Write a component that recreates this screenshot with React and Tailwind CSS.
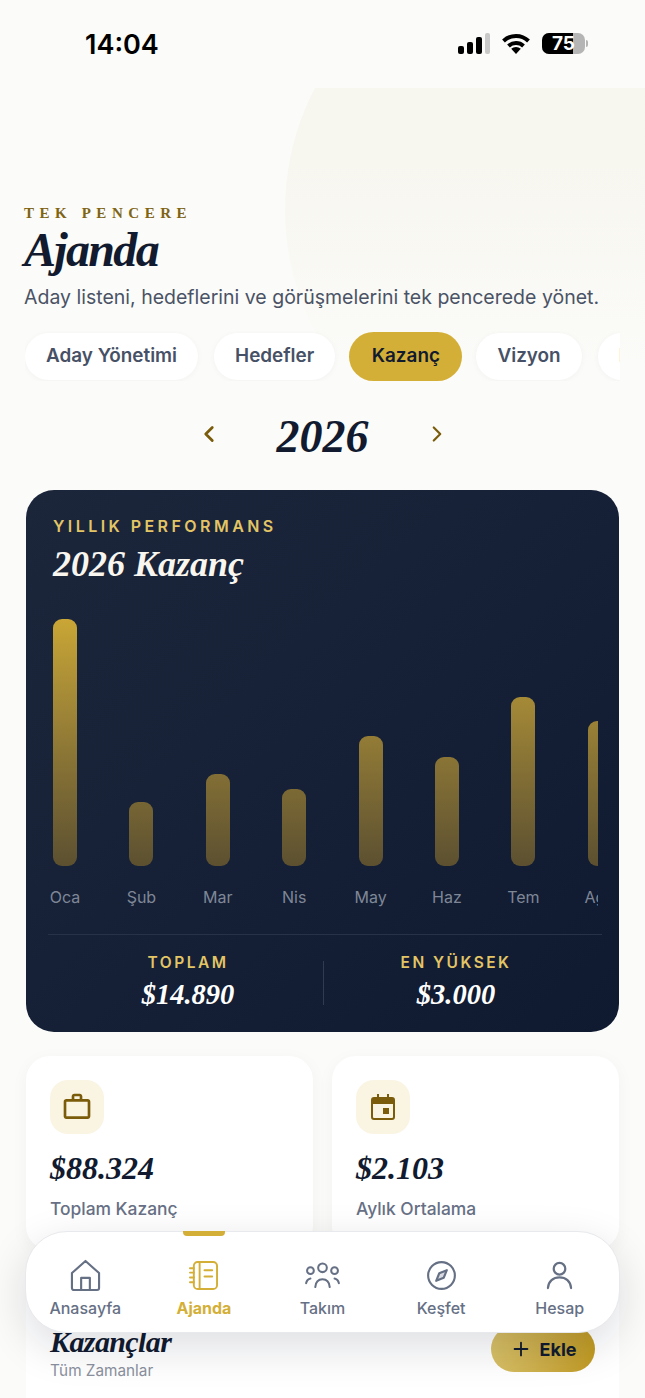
import { ChevronLeft, ChevronRight, Plus } from 'lucide-react'
import { MdOutlineWorkOutline } from 'react-icons/md'

const serif = "font-['Liberation_Serif',serif]"

const tabs = ['Aday Yönetimi', 'Hedefler', 'Kazanç', 'Vizyon', 'Notlar']

const months = [
  { label: 'Oca', height: 247 },
  { label: 'Şub', height: 64 },
  { label: 'Mar', height: 92 },
  { label: 'Nis', height: 77 },
  { label: 'May', height: 130 },
  { label: 'Haz', height: 109 },
  { label: 'Tem', height: 169 },
  { label: 'Ağu', height: 145 },
]

function HomeIcon() {
  return (
    <svg viewBox="0 0 32 34" fill="none" stroke="currentColor" strokeWidth="2.2" strokeLinejoin="round" className="h-[33px] w-[31px]">
      <path d="M2 14.500 16 2l14 12.500V30a2 2 0 0 1-2 2H4a2 2 0 0 1-2-2z" />
      <path d="M11.500 32V19.500h9V32" />
    </svg>
  )
}

function NotebookIcon() {
  return (
    <svg viewBox="0 0 30 32" fill="none" stroke="currentColor" strokeWidth="2" strokeLinecap="round" className="h-[31px] w-[29px]">
      <rect x="5" y="2" width="24" height="28" rx="4" />
      <path d="M11 2v28" />
      <path d="M1 8.500h4M1 13h4M1 18h4M1 23h4" />
      <path d="M16 10.500h8M16 17h8" />
    </svg>
  )
}

function TeamIcon() {
  return (
    <svg viewBox="0 0 36 28" fill="none" stroke="currentColor" strokeWidth="2.100" strokeLinecap="round" className="h-[27px] w-[35px]">
      <circle cx="18" cy="6" r="4.500" />
      <circle cx="5.500" cy="9" r="3.500" />
      <circle cx="30.500" cy="9" r="3.500" />
      <path d="M10.500 26c.5-5 3.500-8 7.500-8s7 3 7.500 8" />
      <path d="M1 22c.6-2.600 2-4.300 4.500-4.800" />
      <path d="M35 22c-.6-2.600-2-4.300-4.500-4.800" />
    </svg>
  )
}

function CompassIcon() {
  return (
    <svg viewBox="0 0 32 32" fill="none" stroke="currentColor" strokeWidth="2.200" strokeLinejoin="round" className="size-[31px]">
      <circle cx="16" cy="16" r="13.800" />
      <path d="M21.500 10.500 18.300 18.300 10.500 21.500 13.700 13.700z" fill="currentColor" fillOpacity="0.25" />
    </svg>
  )
}

function PersonIcon() {
  return (
    <svg viewBox="0 0 28 30" fill="none" stroke="currentColor" strokeWidth="2.300" strokeLinecap="round" className="h-[29px] w-[27px]">
      <circle cx="14" cy="8" r="6" />
      <path d="M2 28c.5-7 5.500-11 12-11s11.500 4 12 11" />
    </svg>
  )
}

function CalendarIcon() {
  return (
    <svg viewBox="0 0 24 26" className="h-[26px] w-[24px]" fill="currentColor">
      <path d="M6 0h2v3h8V0h2v3h3a3 3 0 0 1 3 3v17a3 3 0 0 1-3 3H3a3 3 0 0 1-3-3V6a3 3 0 0 1 3-3h3zM2 10v13a1 1 0 0 0 1 1h18a1 1 0 0 0 1-1V10z" />
      <rect x="12" y="14" width="6" height="6" />
    </svg>
  )
}

function StatusBar() {
  return (
    <div className="flex h-[88px] items-start justify-between pt-[28px] pr-[57px] pl-[85px]">
      <span className="text-[27px] leading-[34px] font-semibold text-black">14:04</span>
      <div className="mt-[5px] flex items-center gap-3">
        <div className="flex h-[21px] items-end gap-[3px]">
          <span className="h-[8px] w-[6px] rounded-[2px] bg-black" />
          <span className="h-[12px] w-[6px] rounded-[2px] bg-black" />
          <span className="h-[17px] w-[6px] rounded-[2px] bg-black" />
          <span className="h-[21px] w-[5px] rounded-[2px] bg-[#c9c9c9]" />
        </div>
        <svg viewBox="0 0 28 21" className="h-[21px] w-[28px]" fill="none" stroke="black" strokeWidth="4">
          <path d="M1.500 8a18 18 0 0 1 25 0" />
          <path d="M6.500 13a11 11 0 0 1 15 0" />
          <path d="M14 21l-4.800-5.200a7 7 0 0 1 9.600 0z" fill="black" stroke="none" />
        </svg>
        <div className="flex items-center gap-[1px]">
          <div className="relative flex h-[21px] w-[43px] overflow-hidden rounded-[7px] bg-[#b5b5b5]">
            <div className="w-[31px] bg-black" />
            <span className="absolute inset-0 flex items-center justify-center text-[19px] leading-none font-bold text-white">75</span>
          </div>
          <span className="h-[7px] w-[2px] rounded-r-full bg-[#b5b5b5]" />
        </div>
      </div>
    </div>
  )
}

function EarningsChart() {
  return (
    <div className="mt-[35px] mr-[21px] ml-[22px] overflow-hidden">
      <div className="flex w-[640px] items-end gap-[52.400px] pl-[5px]">
        {months.map((m) => (
          <div key={m.label} className="flex h-[247px] w-[24px] shrink-0 items-end">
            <div
              className="w-full rounded-[9px] bg-linear-to-b from-[#c9a635] to-[#5c5030] bg-[length:100%_247px] bg-bottom"
              style={{ height: m.height }}
            />
          </div>
        ))}
      </div>
      <div className="mt-[21px] flex w-[640px] gap-[52.400px] pl-[5px]">
        {months.map((m) => (
          <div key={m.label} className="flex w-[24px] shrink-0 justify-center">
            <span className="text-[16px] leading-5 text-[#7f8797]">{m.label}</span>
          </div>
        ))}
      </div>
    </div>
  )
}

function StatColumn({ label, value }) {
  return (
    <div className="flex flex-col items-center">
      <span className="text-[15.500px] leading-5 font-semibold tracking-[0.16em] text-[#e3c565]">{label}</span>
      <span className={`${serif} mt-[4px] text-[28.500px] leading-[36px] font-bold text-white italic`}>{value}</span>
    </div>
  )
}

function SummaryCard({ icon, value, label }) {
  return (
    <div className="h-[194px] rounded-[24px] bg-white px-6 pt-6 shadow-[0_4px_18px_rgba(15,23,42,0.04)]">
      <div className="flex size-[54px] items-center justify-center rounded-[18px] bg-[#faf4e3] text-[#7a5c0a]">
        {icon}
      </div>
      <p className={`${serif} mt-[15px] text-[32px] leading-[38px] font-bold text-[#111a2e] italic`}>{value}</p>
      <p className="mt-[10px] text-[17.400px] leading-6 font-medium text-[#677085]">{label}</p>
    </div>
  )
}

function BottomNav() {
  const items = [
    { label: 'Anasayfa', icon: <HomeIcon /> },
    { label: 'Ajanda', active: true, icon: <NotebookIcon /> },
    { label: 'Takım', icon: <TeamIcon /> },
    { label: 'Keşfet', icon: <CompassIcon /> },
    { label: 'Hesap', icon: <PersonIcon /> },
  ]
  return (
    <nav className="absolute top-[1231px] left-[25px] flex h-[102px] w-[595px] rounded-[42px] border border-[#e8e9ec] bg-white shadow-[0_14px_44px_rgba(15,23,42,0.14)]">
      {items.map((item) => (
        <div
          key={item.label}
          className={`relative flex flex-1 flex-col items-center pt-[25px] ${item.active ? 'text-[#d4af37]' : 'text-[#667085]'}`}
        >
          {item.active && <span className="absolute -top-px h-[5px] w-[42px] rounded-b-[4px] bg-[#d4af37]" />}
          <div className="flex h-[36px] items-center">{item.icon}</div>
          <span className={`mt-[5px] text-[16px] leading-5 ${item.active ? 'font-bold' : 'font-medium'}`}>{item.label}</span>
        </div>
      ))}
    </nav>
  )
}

export default function App() {
  return (
    <div className="relative h-[1398px] w-[645px] overflow-hidden bg-[#fbfbf9] font-['Inter',sans-serif]">
      <div className="pointer-events-none absolute inset-x-0 top-[88px] h-[400px] overflow-hidden">
        <div className="absolute top-[-141px] left-[285px] size-[526px] rounded-full bg-linear-to-b from-[#f7f6ef] from-40% to-transparent to-80%" />
      </div>

      <div className="relative">
        <StatusBar />

        <header className="px-6 pt-[115px]">
          <p className={`${serif} text-[15px] leading-5 font-bold tracking-[0.37em] text-[#7f6414]`}>TEK PENCERE</p>
          <h1 className={`${serif} mt-[3px] text-[48px] leading-[48px] font-bold tracking-[-0.035em] text-[#111a2e] italic`}>Ajanda</h1>
          <p className="mt-[9px] text-[19.500px] leading-7 whitespace-nowrap text-[#4a5365]">
            Aday listeni, hedeflerini ve görüşmelerini tek pencerede yönet.
          </p>
        </header>

        <div className="mt-[20px] ml-[25px] flex h-[50px] w-[595px] items-center gap-[16px] overflow-hidden">
          {tabs.map((tab) =>
            tab === 'Kazanç' ? (
              <span key={tab} className="-mx-[2px] flex h-[49px] shrink-0 items-center rounded-full bg-[#d4af37] px-[22.500px] text-[18.900px] font-semibold text-[#111a2e]">
                {tab}
              </span>
            ) : (
              <span key={tab} className="flex h-[47px] shrink-0 items-center rounded-full bg-white px-[21px] text-[18.900px] font-semibold text-[#475166] shadow-[0_1px_6px_rgba(15,23,42,0.04)]">
                {tab}
              </span>
            ),
          )}
        </div>

        <div className="mt-[30px] flex h-[46px] items-center justify-center">
          <ChevronLeft className="size-[26px] text-[#7a5c0a]" strokeWidth={2.6} />
          <span className={`${serif} w-[202px] pt-[5px] text-center text-[46px] leading-[46px] font-bold text-[#111a2e] italic`}>2026</span>
          <ChevronRight className="size-[26px] text-[#7a5c0a]" strokeWidth={2} />
        </div>

        <section className="mx-[26px] mt-[33px] h-[542px] rounded-[28px] bg-linear-to-br from-[#1c263b] to-[#0f1a31] pt-[26px]">
          <p className="px-[27px] text-[16px] leading-5 font-semibold tracking-[0.215em] text-[#e3c565]">YILLIK PERFORMANS</p>
          <h2 className={`${serif} mt-[8px] px-[27px] text-[36px] leading-[40px] font-bold text-[#f8f6ef] italic`}>2026 Kazanç</h2>
          <EarningsChart />
          <div className="mt-[27px] mr-[17px] ml-[22px] grid grid-cols-[270px_1px_264px] border-t border-[#263247] pt-[18px] pl-[5px]">
            <StatColumn label="TOPLAM" value="$14.890" />
            <div className="mt-[8px] h-[44px] bg-[#303b50]" />
            <StatColumn label="EN YÜKSEK" value="$3.000" />
          </div>
        </section>

        <div className="mx-[26px] mt-[24px] grid grid-cols-2 gap-[19px]">
          <SummaryCard icon={<MdOutlineWorkOutline className="size-[32px]" />} value="$88.324" label="Toplam Kazanç" />
          <SummaryCard icon={<CalendarIcon />} value="$2.103" label="Aylık Ortalama" />
        </div>

        <section className="mx-[26px] mt-[24px] flex h-[200px] items-start justify-between rounded-[24px] bg-white px-[24px] pt-[51px]">
          <div>
            <h3 className={`${serif} text-[30px] leading-[34px] font-bold tracking-[-0.02em] text-[#111a2e] italic`}>Kazançlar</h3>
            <p className="mt-[2px] text-[15.300px] leading-5 text-[#8a909e]">Tüm Zamanlar</p>
          </div>
          <button className="mt-[1px] flex h-[46px] w-[104px] items-center justify-center gap-[8px] rounded-full bg-linear-to-r from-[#d8c066] to-[#c09a20] text-[18px] font-bold text-[#111a2e]">
            <Plus className="size-[22px]" strokeWidth={2} />
            Ekle
          </button>
        </section>
      </div>

      <BottomNav />
    </div>
  )
}
